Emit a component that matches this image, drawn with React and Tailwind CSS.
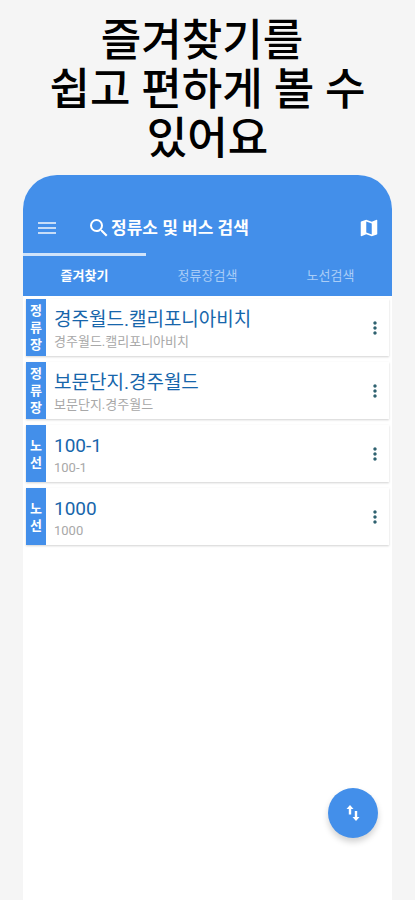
import React, { useState } from "react";
import { MdMenu, MdSearch, MdMap, MdMoreVert } from "react-icons/md";

const tabs = ["즐겨찾기", "정류장검색", "노선검색"];

const favorites = [
  { type: "정류장", name: "경주월드.캘리포니아비치" },
  { type: "정류장", name: "보문단지.경주월드" },
  { type: "노선", name: "100-1" },
  { type: "노선", name: "1000" },
];

const Header = ({ active, setActive }) => {
  return (
    <header className="rounded-t-[34px] bg-[#438fea] text-white">
      <div className="flex h-[78px] items-end px-3 pb-[13px]">
        <button type="button" aria-label="메뉴" className="opacity-70">
          <MdMenu className="h-6 w-6" />
        </button>
        <button
          type="button"
          className="ml-7 flex flex-1 items-center text-[17px] leading-6 font-bold"
        >
          <MdSearch className="h-6 w-6" />
          정류소 및 버스 검색
        </button>
        <button type="button" aria-label="지도" className="py-px">
          <MdMap className="h-[22px] w-[22px]" />
        </button>
      </div>
      <nav className="grid grid-cols-3">
        {tabs.map((tab, i) => (
          <button
            key={tab}
            type="button"
            onClick={() => setActive(i)}
            className={
              active === i
                ? "border-t-[3px] border-[#d0e3fa] py-2.5 text-[13px] leading-5 font-bold"
                : "border-t-[3px] border-transparent py-2.5 text-[13px] leading-5 text-[#a9cdf7]"
            }
          >
            {tab}
          </button>
        ))}
      </nav>
    </header>
  );
};

const FavoriteItem = ({ item }) => {
  return (
    <li className="flex h-[57px] bg-white shadow-[0_1px_2px_rgba(0,0,0,0.18)]">
      <div className="flex w-5 flex-col items-center justify-center bg-[#438fea] text-[13px] leading-[17px] font-bold text-white">
        {item.type.split("").map((letter) => (
          <span key={letter}>{letter}</span>
        ))}
      </div>
      <div className="flex min-w-0 flex-1 flex-col justify-end pb-1 pl-2">
        <p className="truncate text-[19px] leading-6 text-[#1766ab]">
          {item.name}
        </p>
        <p className="truncate text-[13px] leading-5 text-[#a8a8a8]">
          {item.name}
        </p>
      </div>
      <button type="button" aria-label="더보기" className="px-1 text-[#2f6270]">
        <MdMoreVert className="h-5 w-5" />
      </button>
    </li>
  );
};

const App = () => {
  const [active, setActive] = useState(0);

  return (
    <div className="flex min-h-screen flex-col bg-[#f5f5f5] px-[23px] font-[Roboto,'Noto_Sans_CJK_KR',sans-serif]">
      <h1 className="pt-[17px] pb-[11px] text-center text-[44px] leading-[49px] font-medium text-black">
        즐겨찾기를&nbsp;
        <br />
        쉽고 편하게 볼 수
        <br />
        있어요
      </h1>
      <main className="relative flex flex-1 flex-col rounded-t-[34px] bg-white">
        <Header active={active} setActive={setActive} />
        <ul className="flex flex-col gap-1.5 px-[3px] pt-[3px]">
          {favorites.map((item) => (
            <FavoriteItem key={item.name} item={item} />
          ))}
        </ul>
        <button
          type="button"
          aria-label="정렬"
          className="absolute right-3.5 bottom-[62px] flex h-[50px] w-[50px] items-center justify-center rounded-full bg-[#438fea] text-white shadow-[0_4px_6px_rgba(0,0,0,0.18)]"
        >
          <svg viewBox="0 0 14 18" className="h-[18px] w-3.5" fill="currentColor">
            <path d="M4 1 L7.5 5 H5.2 V10.5 H2.8 V5 H0.5 Z" />
            <path d="M10 17 L6.5 13 H8.8 V7 H11.2 V13 H13.5 Z" />
          </svg>
        </button>
      </main>
    </div>
  );
};

export default App;
